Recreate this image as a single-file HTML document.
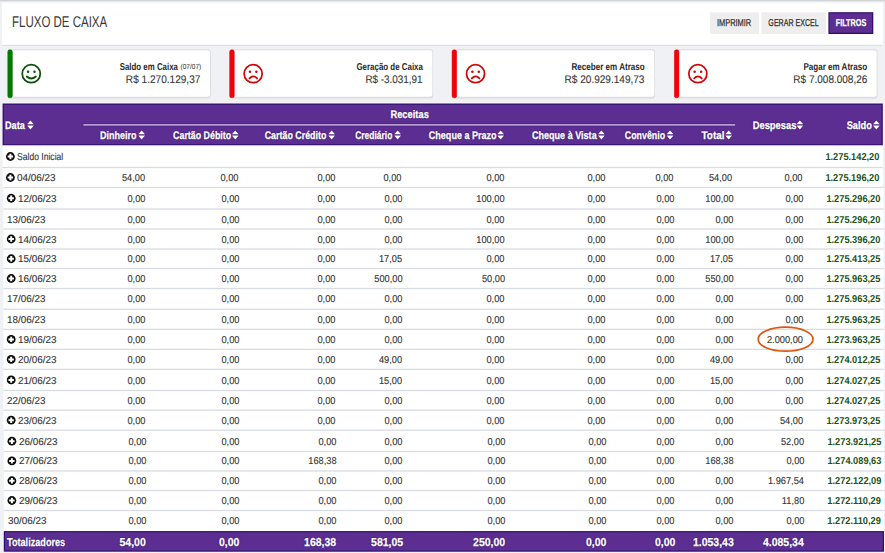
<!DOCTYPE html>
<html lang="pt-BR"><head><meta charset="utf-8"><title>Fluxo de Caixa</title>
<style>
html,body{margin:0;padding:0}
body{width:885px;height:553px;overflow:hidden;background:#f0f1f5;position:relative;font-family:"Liberation Sans",sans-serif;text-rendering:geometricPrecision}
#bg{position:absolute;left:0;top:0}
.t{position:absolute;white-space:nowrap;display:block;line-height:20px;height:20px;-webkit-text-stroke:0.12px currentColor}
</style></head>
<body>
<svg id="bg" width="885" height="553" viewBox="0 0 885 553">
<rect x="0.00" y="0.00" width="885.00" height="553.00" fill="#f0f1f5" />
<rect x="0.00" y="0.00" width="885.00" height="1.00" fill="#d3d4d7" />
<rect x="0.00" y="1.00" width="885.00" height="1.00" fill="#e7e8ec" />
<rect x="2.00" y="44.60" width="880.80" height="1.40" fill="#e0e1e6" />
<rect x="2.00" y="2.70" width="880.80" height="42.00" fill="#fff" />
<rect x="710.10" y="12.30" width="48.80" height="21.60" fill="#eeeeee" />
<rect x="761.50" y="12.30" width="64.50" height="21.60" fill="#eeeeee" />
<rect x="828.40" y="12.20" width="44.90" height="21.80" fill="#2f0c6b" />
<rect x="829.60" y="13.40" width="42.50" height="19.40" fill="#5c2e91" />
<rect x="7.40" y="50.5" width="203.30" height="48.60" rx="3" fill="#e4e5e9"/>
<rect x="7.20" y="49.3" width="203.50" height="48.50" rx="3" fill="#dadbdf"/>
<rect x="7.80" y="50.2" width="202.20" height="46.60" rx="2.4" fill="#fff"/>
<rect x="6.90" y="49.3" width="6" height="49.10" rx="3" fill="#fff"/>
<rect x="7.75" y="49.8" width="4.6" height="48.00" rx="1.9" fill="#007d00" stroke="#005c00" stroke-width="0.5"/>
<g transform="translate(31.25 73.65)" fill="none" stroke="#0b4f08"><circle r="9.02" stroke-width="1.75"/><circle cx="-3.2" cy="-1.95" r="1.25" fill="#0b4f08" stroke="none"/><circle cx="3.25" cy="-1.95" r="1.25" fill="#0b4f08" stroke="none"/><path d="M-4.5 2.9 Q0 6.8 4.6 2.9" stroke-width="1.8" stroke-linecap="round"/></g>
<rect x="229.30" y="50.5" width="203.80" height="48.60" rx="3" fill="#e4e5e9"/>
<rect x="229.10" y="49.3" width="204.00" height="48.50" rx="3" fill="#dadbdf"/>
<rect x="229.70" y="50.2" width="202.70" height="46.60" rx="2.4" fill="#fff"/>
<rect x="228.80" y="49.3" width="6" height="49.10" rx="3" fill="#fff"/>
<rect x="229.65" y="49.8" width="4.6" height="48.00" rx="1.9" fill="#f40006" stroke="#c40006" stroke-width="0.5"/>
<g transform="translate(253.15 73.65)" fill="none" stroke="#cc0808"><circle r="9.02" stroke-width="1.75"/><circle cx="-3.2" cy="-1.95" r="1.25" fill="#cc0808" stroke="none"/><circle cx="3.25" cy="-1.95" r="1.25" fill="#cc0808" stroke="none"/><path d="M-3.7 4.8 Q0.1 0.5 3.9 4.8" stroke-width="1.8" stroke-linecap="round"/></g>
<rect x="451.70" y="50.5" width="203.30" height="48.60" rx="3" fill="#e4e5e9"/>
<rect x="451.50" y="49.3" width="203.50" height="48.50" rx="3" fill="#dadbdf"/>
<rect x="452.10" y="50.2" width="202.20" height="46.60" rx="2.4" fill="#fff"/>
<rect x="451.20" y="49.3" width="6" height="49.10" rx="3" fill="#fff"/>
<rect x="452.05" y="49.8" width="4.6" height="48.00" rx="1.9" fill="#f40006" stroke="#c40006" stroke-width="0.5"/>
<g transform="translate(475.55 73.65)" fill="none" stroke="#cc0808"><circle r="9.02" stroke-width="1.75"/><circle cx="-3.2" cy="-1.95" r="1.25" fill="#cc0808" stroke="none"/><circle cx="3.25" cy="-1.95" r="1.25" fill="#cc0808" stroke="none"/><path d="M-3.7 4.8 Q0.1 0.5 3.9 4.8" stroke-width="1.8" stroke-linecap="round"/></g>
<rect x="674.00" y="50.5" width="203.40" height="48.60" rx="3" fill="#e4e5e9"/>
<rect x="673.80" y="49.3" width="203.60" height="48.50" rx="3" fill="#dadbdf"/>
<rect x="674.40" y="50.2" width="202.30" height="46.60" rx="2.4" fill="#fff"/>
<rect x="673.50" y="49.3" width="6" height="49.10" rx="3" fill="#fff"/>
<rect x="674.35" y="49.8" width="4.6" height="48.00" rx="1.9" fill="#f40006" stroke="#c40006" stroke-width="0.5"/>
<g transform="translate(697.85 73.65)" fill="none" stroke="#cc0808"><circle r="9.02" stroke-width="1.75"/><circle cx="-3.2" cy="-1.95" r="1.25" fill="#cc0808" stroke="none"/><circle cx="3.25" cy="-1.95" r="1.25" fill="#cc0808" stroke="none"/><path d="M-3.7 4.8 Q0.1 0.5 3.9 4.8" stroke-width="1.8" stroke-linecap="round"/></g>
<rect x="2.30" y="102.50" width="880.80" height="1.50" fill="#fbfbfd" />
<rect x="2.60" y="103.50" width="880.20" height="42.00" fill="#2f0c6b" />
<rect x="3.80" y="104.70" width="877.80" height="39.60" fill="#5c2e91" />
<rect x="82.80" y="123.40" width="653.00" height="3.10" fill="#4a2384" />
<rect x="83.40" y="124.10" width="651.80" height="1.60" fill="#bda9da" />
<path transform="translate(27.00 120.40)" d="M0 3.9 L3.45 0 L6.9 3.9Z M0 5.1 L3.45 9 L6.9 5.1Z" fill="#fff" stroke="#3b1779" stroke-width="0.9" paint-order="stroke"/>
<path transform="translate(138.20 130.40)" d="M0 3.9 L3.45 0 L6.9 3.9Z M0 5.1 L3.45 9 L6.9 5.1Z" fill="#fff" stroke="#3b1779" stroke-width="0.9" paint-order="stroke"/>
<path transform="translate(231.80 130.40)" d="M0 3.9 L3.45 0 L6.9 3.9Z M0 5.1 L3.45 9 L6.9 5.1Z" fill="#fff" stroke="#3b1779" stroke-width="0.9" paint-order="stroke"/>
<path transform="translate(328.20 130.40)" d="M0 3.9 L3.45 0 L6.9 3.9Z M0 5.1 L3.45 9 L6.9 5.1Z" fill="#fff" stroke="#3b1779" stroke-width="0.9" paint-order="stroke"/>
<path transform="translate(394.20 130.40)" d="M0 3.9 L3.45 0 L6.9 3.9Z M0 5.1 L3.45 9 L6.9 5.1Z" fill="#fff" stroke="#3b1779" stroke-width="0.9" paint-order="stroke"/>
<path transform="translate(497.20 130.40)" d="M0 3.9 L3.45 0 L6.9 3.9Z M0 5.1 L3.45 9 L6.9 5.1Z" fill="#fff" stroke="#3b1779" stroke-width="0.9" paint-order="stroke"/>
<path transform="translate(597.90 130.40)" d="M0 3.9 L3.45 0 L6.9 3.9Z M0 5.1 L3.45 9 L6.9 5.1Z" fill="#fff" stroke="#3b1779" stroke-width="0.9" paint-order="stroke"/>
<path transform="translate(666.60 130.40)" d="M0 3.9 L3.45 0 L6.9 3.9Z M0 5.1 L3.45 9 L6.9 5.1Z" fill="#fff" stroke="#3b1779" stroke-width="0.9" paint-order="stroke"/>
<path transform="translate(725.20 130.40)" d="M0 3.9 L3.45 0 L6.9 3.9Z M0 5.1 L3.45 9 L6.9 5.1Z" fill="#fff" stroke="#3b1779" stroke-width="0.9" paint-order="stroke"/>
<path transform="translate(796.40 120.40)" d="M0 3.9 L3.45 0 L6.9 3.9Z M0 5.1 L3.45 9 L6.9 5.1Z" fill="#fff" stroke="#3b1779" stroke-width="0.9" paint-order="stroke"/>
<path transform="translate(872.90 120.40)" d="M0 3.9 L3.45 0 L6.9 3.9Z M0 5.1 L3.45 9 L6.9 5.1Z" fill="#fff" stroke="#3b1779" stroke-width="0.9" paint-order="stroke"/>
<rect x="2.60" y="145.50" width="880.20" height="42.00" fill="#fff" />
<rect x="3.40" y="187.50" width="880.20" height="242.70" fill="#fff" />
<rect x="3.80" y="430.20" width="880.20" height="100.90" fill="#fff" />
<g transform="translate(10.40 156.50)"><circle r="4.4" fill="#0a0a0a"/><path d="M-2.7 0H2.7M0 -2.7V2.7" stroke="#fff" stroke-width="2" fill="none"/></g>
<rect x="2.60" y="166.85" width="880.20" height="1.30" fill="#d9dce3" />
<g transform="translate(10.40 177.50)"><circle r="4.4" fill="#0a0a0a"/><path d="M-2.7 0H2.7M0 -2.7V2.7" stroke="#fff" stroke-width="2" fill="none"/></g>
<rect x="3.40" y="186.85" width="880.20" height="1.30" fill="#d9dce3" />
<g transform="translate(11.20 198.25)"><circle r="4.4" fill="#0a0a0a"/><path d="M-2.7 0H2.7M0 -2.7V2.7" stroke="#fff" stroke-width="2" fill="none"/></g>
<rect x="3.40" y="208.35" width="880.20" height="1.30" fill="#d9dce3" />
<rect x="3.40" y="228.35" width="880.20" height="1.30" fill="#d9dce3" />
<g transform="translate(11.20 239.00)"><circle r="4.4" fill="#0a0a0a"/><path d="M-2.7 0H2.7M0 -2.7V2.7" stroke="#fff" stroke-width="2" fill="none"/></g>
<rect x="3.40" y="248.35" width="880.20" height="1.30" fill="#d9dce3" />
<g transform="translate(11.20 258.75)"><circle r="4.4" fill="#0a0a0a"/><path d="M-2.7 0H2.7M0 -2.7V2.7" stroke="#fff" stroke-width="2" fill="none"/></g>
<rect x="3.40" y="267.85" width="880.20" height="1.30" fill="#d9dce3" />
<g transform="translate(11.20 278.50)"><circle r="4.4" fill="#0a0a0a"/><path d="M-2.7 0H2.7M0 -2.7V2.7" stroke="#fff" stroke-width="2" fill="none"/></g>
<rect x="3.40" y="287.85" width="880.20" height="1.30" fill="#d9dce3" />
<rect x="3.40" y="308.55" width="880.20" height="1.30" fill="#d9dce3" />
<rect x="3.40" y="328.75" width="880.20" height="1.30" fill="#d9dce3" />
<g transform="translate(11.20 339.40)"><circle r="4.4" fill="#0a0a0a"/><path d="M-2.7 0H2.7M0 -2.7V2.7" stroke="#fff" stroke-width="2" fill="none"/></g>
<rect x="3.40" y="348.75" width="880.20" height="1.30" fill="#d9dce3" />
<g transform="translate(11.20 359.40)"><circle r="4.4" fill="#0a0a0a"/><path d="M-2.7 0H2.7M0 -2.7V2.7" stroke="#fff" stroke-width="2" fill="none"/></g>
<rect x="3.40" y="368.75" width="880.20" height="1.30" fill="#d9dce3" />
<g transform="translate(11.20 379.95)"><circle r="4.4" fill="#0a0a0a"/><path d="M-2.7 0H2.7M0 -2.7V2.7" stroke="#fff" stroke-width="2" fill="none"/></g>
<rect x="3.40" y="389.85" width="880.20" height="1.30" fill="#d9dce3" />
<rect x="3.40" y="409.55" width="880.20" height="1.30" fill="#d9dce3" />
<g transform="translate(11.20 420.20)"><circle r="4.4" fill="#0a0a0a"/><path d="M-2.7 0H2.7M0 -2.7V2.7" stroke="#fff" stroke-width="2" fill="none"/></g>
<rect x="4.10" y="429.55" width="880.20" height="1.30" fill="#d9dce3" />
<g transform="translate(11.90 441.20)"><circle r="4.4" fill="#0a0a0a"/><path d="M-2.7 0H2.7M0 -2.7V2.7" stroke="#fff" stroke-width="2" fill="none"/></g>
<rect x="4.10" y="450.85" width="880.20" height="1.30" fill="#d9dce3" />
<g transform="translate(11.90 460.90)"><circle r="4.4" fill="#0a0a0a"/><path d="M-2.7 0H2.7M0 -2.7V2.7" stroke="#fff" stroke-width="2" fill="none"/></g>
<rect x="4.10" y="470.35" width="880.20" height="1.30" fill="#d9dce3" />
<g transform="translate(11.90 480.75)"><circle r="4.4" fill="#0a0a0a"/><path d="M-2.7 0H2.7M0 -2.7V2.7" stroke="#fff" stroke-width="2" fill="none"/></g>
<rect x="4.10" y="489.85" width="880.20" height="1.30" fill="#d9dce3" />
<g transform="translate(11.90 500.50)"><circle r="4.4" fill="#0a0a0a"/><path d="M-2.7 0H2.7M0 -2.7V2.7" stroke="#fff" stroke-width="2" fill="none"/></g>
<rect x="4.10" y="509.85" width="880.20" height="1.30" fill="#d9dce3" />
<ellipse cx="785.6" cy="339.2" rx="27.4" ry="12" fill="none" stroke="#db5810" stroke-width="1.7"/>
<rect x="3.80" y="531.10" width="880.20" height="20.60" fill="#2f0c6b" />
<rect x="5.00" y="532.30" width="877.80" height="18.20" fill="#5c2e91" />
</svg>
<span class="t" style="top:13px;font-size:15.5px;color:#383838;left:11.90px;transform-origin:0 50%;transform:scaleX(0.7418);-webkit-text-stroke:0;">FLUXO DE CAIXA</span>
<span class="t" style="top:14px;font-size:10px;color:#2e2e2e;left:711.45px;transform-origin:50% 50%;transform:scaleX(0.7417);-webkit-text-stroke:0.25px currentColor;">IMPRIMIR</span>
<span class="t" style="top:14px;font-size:10px;color:#2e2e2e;left:758.18px;transform-origin:50% 50%;transform:scaleX(0.7085);-webkit-text-stroke:0.25px currentColor;">GERAR EXCEL</span>
<span class="t" style="top:14px;font-size:10px;color:#fff;font-weight:700;-webkit-text-stroke:0;left:829.83px;transform-origin:50% 50%;transform:scaleX(0.7233);-webkit-text-stroke:0.25px currentColor;">FILTROS</span>
<span class="t" style="top:58px;font-size:7px;color:#484848;right:683.60px;transform-origin:100% 50%;transform:scaleX(0.9288);">(07/07)</span>
<span class="t" style="top:58px;font-size:10px;color:#2a2a2a;font-weight:700;-webkit-text-stroke:0;right:707.00px;transform-origin:100% 50%;transform:scaleX(0.7873);">Saldo em Caixa</span>
<span class="t" style="top:70px;font-size:11px;color:#383838;right:684.30px;transform-origin:100% 50%;transform:scaleX(0.9158);-webkit-text-stroke:0.12px currentColor;">R$ 1.270.129,37</span>
<span class="t" style="top:58px;font-size:10px;color:#2a2a2a;font-weight:700;-webkit-text-stroke:0;right:462.10px;transform-origin:100% 50%;transform:scaleX(0.7922);">Geração de Caixa</span>
<span class="t" style="top:70px;font-size:11px;color:#383838;right:462.40px;transform-origin:100% 50%;transform:scaleX(0.8994);-webkit-text-stroke:0.12px currentColor;">R$ -3.031,91</span>
<span class="t" style="top:58px;font-size:10px;color:#2a2a2a;font-weight:700;-webkit-text-stroke:0;right:239.90px;transform-origin:100% 50%;transform:scaleX(0.8074);">Receber em Atraso</span>
<span class="t" style="top:70px;font-size:11px;color:#383838;right:240.50px;transform-origin:100% 50%;transform:scaleX(0.9135);-webkit-text-stroke:0.12px currentColor;">R$ 20.929.149,73</span>
<span class="t" style="top:58px;font-size:10px;color:#2a2a2a;font-weight:700;-webkit-text-stroke:0;right:17.70px;transform-origin:100% 50%;transform:scaleX(0.8052);">Pagar em Atraso</span>
<span class="t" style="top:70px;font-size:11px;color:#383838;right:17.80px;transform-origin:100% 50%;transform:scaleX(0.9097);-webkit-text-stroke:0.12px currentColor;">R$ 7.008.008,26</span>
<span class="t" style="top:116px;font-size:11px;color:#fff;font-weight:700;-webkit-text-stroke:0;left:5.40px;transform-origin:0 50%;transform:scaleX(0.8304);-webkit-text-stroke:0.3px #fff;text-shadow:0 0 1px #2c0a66,0 0 1.5px #2c0a66;">Data</span>
<span class="t" style="top:105px;font-size:11px;color:#fff;font-weight:700;-webkit-text-stroke:0;left:386.57px;transform-origin:50% 50%;transform:scaleX(0.8486);-webkit-text-stroke:0.3px #fff;text-shadow:0 0 1px #2c0a66,0 0 1.5px #2c0a66;">Receitas</span>
<span class="t" style="top:126px;font-size:11px;color:#fff;font-weight:700;-webkit-text-stroke:0;right:748.45px;transform-origin:100% 50%;transform:scaleX(0.8181);-webkit-text-stroke:0.3px #fff;text-shadow:0 0 1px #2c0a66,0 0 1.5px #2c0a66;">Dinheiro</span>
<span class="t" style="top:126px;font-size:11px;color:#fff;font-weight:700;-webkit-text-stroke:0;right:654.05px;transform-origin:100% 50%;transform:scaleX(0.8042);-webkit-text-stroke:0.3px #fff;text-shadow:0 0 1px #2c0a66,0 0 1.5px #2c0a66;">Cartão Débito</span>
<span class="t" style="top:126px;font-size:11px;color:#fff;font-weight:700;-webkit-text-stroke:0;right:558.35px;transform-origin:100% 50%;transform:scaleX(0.8076);-webkit-text-stroke:0.3px #fff;text-shadow:0 0 1px #2c0a66,0 0 1.5px #2c0a66;">Cartão Crédito</span>
<span class="t" style="top:126px;font-size:11px;color:#fff;font-weight:700;-webkit-text-stroke:0;right:492.45px;transform-origin:100% 50%;transform:scaleX(0.7682);-webkit-text-stroke:0.3px #fff;text-shadow:0 0 1px #2c0a66,0 0 1.5px #2c0a66;">Crediário</span>
<span class="t" style="top:126px;font-size:11px;color:#fff;font-weight:700;-webkit-text-stroke:0;right:388.65px;transform-origin:100% 50%;transform:scaleX(0.8204);-webkit-text-stroke:0.3px #fff;text-shadow:0 0 1px #2c0a66,0 0 1.5px #2c0a66;">Cheque a Prazo</span>
<span class="t" style="top:126px;font-size:11px;color:#fff;font-weight:700;-webkit-text-stroke:0;right:288.45px;transform-origin:100% 50%;transform:scaleX(0.8225);-webkit-text-stroke:0.3px #fff;text-shadow:0 0 1px #2c0a66,0 0 1.5px #2c0a66;">Cheque à Vista</span>
<span class="t" style="top:126px;font-size:11px;color:#fff;font-weight:700;-webkit-text-stroke:0;right:219.85px;transform-origin:100% 50%;transform:scaleX(0.8042);-webkit-text-stroke:0.3px #fff;text-shadow:0 0 1px #2c0a66,0 0 1.5px #2c0a66;">Convênio</span>
<span class="t" style="top:126px;font-size:11px;color:#fff;font-weight:700;-webkit-text-stroke:0;right:160.25px;transform-origin:100% 50%;transform:scaleX(0.8995);-webkit-text-stroke:0.3px #fff;text-shadow:0 0 1px #2c0a66,0 0 1.5px #2c0a66;">Total</span>
<span class="t" style="top:116px;font-size:11px;color:#fff;font-weight:700;-webkit-text-stroke:0;right:88.65px;transform-origin:100% 50%;transform:scaleX(0.8507);-webkit-text-stroke:0.3px #fff;text-shadow:0 0 1px #2c0a66,0 0 1.5px #2c0a66;">Despesas</span>
<span class="t" style="top:116px;font-size:11px;color:#fff;font-weight:700;-webkit-text-stroke:0;right:12.65px;transform-origin:100% 50%;transform:scaleX(0.8447);-webkit-text-stroke:0.3px #fff;text-shadow:0 0 1px #2c0a66,0 0 1.5px #2c0a66;">Saldo</span>
<span class="t" style="top:148px;font-size:10px;color:#333;left:17.00px;transform-origin:0 50%;transform:scaleX(0.8568);">Saldo Inicial</span>
<span class="t" style="top:148px;font-size:10px;color:#1a5218;font-weight:700;-webkit-text-stroke:0;right:5.40px;transform-origin:100% 50%;transform:scaleX(0.9250);">1.275.142,20</span>
<span class="t" style="top:169px;font-size:10px;color:#333;left:17.00px;transform-origin:0 50%;transform:scaleX(0.9890);">04/06/23</span>
<span class="t" style="top:169px;font-size:10px;color:#333;right:740.40px;transform-origin:100% 50%;transform:scaleX(0.9250);">54,00</span>
<span class="t" style="top:169px;font-size:10px;color:#333;right:646.80px;transform-origin:100% 50%;transform:scaleX(0.9250);">0,00</span>
<span class="t" style="top:169px;font-size:10px;color:#333;right:550.00px;transform-origin:100% 50%;transform:scaleX(0.9250);">0,00</span>
<span class="t" style="top:169px;font-size:10px;color:#333;right:483.60px;transform-origin:100% 50%;transform:scaleX(0.9250);">0,00</span>
<span class="t" style="top:169px;font-size:10px;color:#333;right:381.00px;transform-origin:100% 50%;transform:scaleX(0.9250);">0,00</span>
<span class="t" style="top:169px;font-size:10px;color:#333;right:280.00px;transform-origin:100% 50%;transform:scaleX(0.9250);">0,00</span>
<span class="t" style="top:169px;font-size:10px;color:#333;right:211.60px;transform-origin:100% 50%;transform:scaleX(0.9250);">0,00</span>
<span class="t" style="top:169px;font-size:10px;color:#333;right:152.60px;transform-origin:100% 50%;transform:scaleX(0.9250);">54,00</span>
<span class="t" style="top:169px;font-size:10px;color:#333;right:82.40px;transform-origin:100% 50%;transform:scaleX(0.9250);">0,00</span>
<span class="t" style="top:169px;font-size:10px;color:#1a5218;font-weight:700;-webkit-text-stroke:0;right:5.40px;transform-origin:100% 50%;transform:scaleX(0.9250);">1.275.196,20</span>
<span class="t" style="top:190px;font-size:10px;color:#333;left:17.80px;transform-origin:0 50%;transform:scaleX(0.9890);">12/06/23</span>
<span class="t" style="top:190px;font-size:10px;color:#333;right:739.60px;transform-origin:100% 50%;transform:scaleX(0.9250);">0,00</span>
<span class="t" style="top:190px;font-size:10px;color:#333;right:646.00px;transform-origin:100% 50%;transform:scaleX(0.9250);">0,00</span>
<span class="t" style="top:190px;font-size:10px;color:#333;right:549.20px;transform-origin:100% 50%;transform:scaleX(0.9250);">0,00</span>
<span class="t" style="top:190px;font-size:10px;color:#333;right:482.80px;transform-origin:100% 50%;transform:scaleX(0.9250);">0,00</span>
<span class="t" style="top:190px;font-size:10px;color:#333;right:380.20px;transform-origin:100% 50%;transform:scaleX(0.9250);">100,00</span>
<span class="t" style="top:190px;font-size:10px;color:#333;right:279.20px;transform-origin:100% 50%;transform:scaleX(0.9250);">0,00</span>
<span class="t" style="top:190px;font-size:10px;color:#333;right:210.80px;transform-origin:100% 50%;transform:scaleX(0.9250);">0,00</span>
<span class="t" style="top:190px;font-size:10px;color:#333;right:151.80px;transform-origin:100% 50%;transform:scaleX(0.9250);">100,00</span>
<span class="t" style="top:190px;font-size:10px;color:#333;right:81.60px;transform-origin:100% 50%;transform:scaleX(0.9250);">0,00</span>
<span class="t" style="top:190px;font-size:10px;color:#1a5218;font-weight:700;-webkit-text-stroke:0;right:4.60px;transform-origin:100% 50%;transform:scaleX(0.9250);">1.275.296,20</span>
<span class="t" style="top:211px;font-size:10px;color:#333;left:7.00px;transform-origin:0 50%;transform:scaleX(0.9890);">13/06/23</span>
<span class="t" style="top:211px;font-size:10px;color:#333;right:739.60px;transform-origin:100% 50%;transform:scaleX(0.9250);">0,00</span>
<span class="t" style="top:211px;font-size:10px;color:#333;right:646.00px;transform-origin:100% 50%;transform:scaleX(0.9250);">0,00</span>
<span class="t" style="top:211px;font-size:10px;color:#333;right:549.20px;transform-origin:100% 50%;transform:scaleX(0.9250);">0,00</span>
<span class="t" style="top:211px;font-size:10px;color:#333;right:482.80px;transform-origin:100% 50%;transform:scaleX(0.9250);">0,00</span>
<span class="t" style="top:211px;font-size:10px;color:#333;right:380.20px;transform-origin:100% 50%;transform:scaleX(0.9250);">0,00</span>
<span class="t" style="top:211px;font-size:10px;color:#333;right:279.20px;transform-origin:100% 50%;transform:scaleX(0.9250);">0,00</span>
<span class="t" style="top:211px;font-size:10px;color:#333;right:210.80px;transform-origin:100% 50%;transform:scaleX(0.9250);">0,00</span>
<span class="t" style="top:211px;font-size:10px;color:#333;right:151.80px;transform-origin:100% 50%;transform:scaleX(0.9250);">0,00</span>
<span class="t" style="top:211px;font-size:10px;color:#333;right:81.60px;transform-origin:100% 50%;transform:scaleX(0.9250);">0,00</span>
<span class="t" style="top:211px;font-size:10px;color:#1a5218;font-weight:700;-webkit-text-stroke:0;right:4.60px;transform-origin:100% 50%;transform:scaleX(0.9250);">1.275.296,20</span>
<span class="t" style="top:231px;font-size:10px;color:#333;left:17.80px;transform-origin:0 50%;transform:scaleX(0.9890);">14/06/23</span>
<span class="t" style="top:231px;font-size:10px;color:#333;right:739.60px;transform-origin:100% 50%;transform:scaleX(0.9250);">0,00</span>
<span class="t" style="top:231px;font-size:10px;color:#333;right:646.00px;transform-origin:100% 50%;transform:scaleX(0.9250);">0,00</span>
<span class="t" style="top:231px;font-size:10px;color:#333;right:549.20px;transform-origin:100% 50%;transform:scaleX(0.9250);">0,00</span>
<span class="t" style="top:231px;font-size:10px;color:#333;right:482.80px;transform-origin:100% 50%;transform:scaleX(0.9250);">0,00</span>
<span class="t" style="top:231px;font-size:10px;color:#333;right:380.20px;transform-origin:100% 50%;transform:scaleX(0.9250);">100,00</span>
<span class="t" style="top:231px;font-size:10px;color:#333;right:279.20px;transform-origin:100% 50%;transform:scaleX(0.9250);">0,00</span>
<span class="t" style="top:231px;font-size:10px;color:#333;right:210.80px;transform-origin:100% 50%;transform:scaleX(0.9250);">0,00</span>
<span class="t" style="top:231px;font-size:10px;color:#333;right:151.80px;transform-origin:100% 50%;transform:scaleX(0.9250);">100,00</span>
<span class="t" style="top:231px;font-size:10px;color:#333;right:81.60px;transform-origin:100% 50%;transform:scaleX(0.9250);">0,00</span>
<span class="t" style="top:231px;font-size:10px;color:#1a5218;font-weight:700;-webkit-text-stroke:0;right:4.60px;transform-origin:100% 50%;transform:scaleX(0.9250);">1.275.396,20</span>
<span class="t" style="top:250px;font-size:10px;color:#333;left:17.80px;transform-origin:0 50%;transform:scaleX(0.9890);">15/06/23</span>
<span class="t" style="top:250px;font-size:10px;color:#333;right:739.60px;transform-origin:100% 50%;transform:scaleX(0.9250);">0,00</span>
<span class="t" style="top:250px;font-size:10px;color:#333;right:646.00px;transform-origin:100% 50%;transform:scaleX(0.9250);">0,00</span>
<span class="t" style="top:250px;font-size:10px;color:#333;right:549.20px;transform-origin:100% 50%;transform:scaleX(0.9250);">0,00</span>
<span class="t" style="top:250px;font-size:10px;color:#333;right:482.80px;transform-origin:100% 50%;transform:scaleX(0.9250);">17,05</span>
<span class="t" style="top:250px;font-size:10px;color:#333;right:380.20px;transform-origin:100% 50%;transform:scaleX(0.9250);">0,00</span>
<span class="t" style="top:250px;font-size:10px;color:#333;right:279.20px;transform-origin:100% 50%;transform:scaleX(0.9250);">0,00</span>
<span class="t" style="top:250px;font-size:10px;color:#333;right:210.80px;transform-origin:100% 50%;transform:scaleX(0.9250);">0,00</span>
<span class="t" style="top:250px;font-size:10px;color:#333;right:151.80px;transform-origin:100% 50%;transform:scaleX(0.9250);">17,05</span>
<span class="t" style="top:250px;font-size:10px;color:#333;right:81.60px;transform-origin:100% 50%;transform:scaleX(0.9250);">0,00</span>
<span class="t" style="top:250px;font-size:10px;color:#1a5218;font-weight:700;-webkit-text-stroke:0;right:4.60px;transform-origin:100% 50%;transform:scaleX(0.9250);">1.275.413,25</span>
<span class="t" style="top:270px;font-size:10px;color:#333;left:17.80px;transform-origin:0 50%;transform:scaleX(0.9890);">16/06/23</span>
<span class="t" style="top:270px;font-size:10px;color:#333;right:739.60px;transform-origin:100% 50%;transform:scaleX(0.9250);">0,00</span>
<span class="t" style="top:270px;font-size:10px;color:#333;right:646.00px;transform-origin:100% 50%;transform:scaleX(0.9250);">0,00</span>
<span class="t" style="top:270px;font-size:10px;color:#333;right:549.20px;transform-origin:100% 50%;transform:scaleX(0.9250);">0,00</span>
<span class="t" style="top:270px;font-size:10px;color:#333;right:482.80px;transform-origin:100% 50%;transform:scaleX(0.9250);">500,00</span>
<span class="t" style="top:270px;font-size:10px;color:#333;right:380.20px;transform-origin:100% 50%;transform:scaleX(0.9250);">50,00</span>
<span class="t" style="top:270px;font-size:10px;color:#333;right:279.20px;transform-origin:100% 50%;transform:scaleX(0.9250);">0,00</span>
<span class="t" style="top:270px;font-size:10px;color:#333;right:210.80px;transform-origin:100% 50%;transform:scaleX(0.9250);">0,00</span>
<span class="t" style="top:270px;font-size:10px;color:#333;right:151.80px;transform-origin:100% 50%;transform:scaleX(0.9250);">550,00</span>
<span class="t" style="top:270px;font-size:10px;color:#333;right:81.60px;transform-origin:100% 50%;transform:scaleX(0.9250);">0,00</span>
<span class="t" style="top:270px;font-size:10px;color:#1a5218;font-weight:700;-webkit-text-stroke:0;right:4.60px;transform-origin:100% 50%;transform:scaleX(0.9250);">1.275.963,25</span>
<span class="t" style="top:290px;font-size:10px;color:#333;left:7.00px;transform-origin:0 50%;transform:scaleX(0.9890);">17/06/23</span>
<span class="t" style="top:290px;font-size:10px;color:#333;right:739.60px;transform-origin:100% 50%;transform:scaleX(0.9250);">0,00</span>
<span class="t" style="top:290px;font-size:10px;color:#333;right:646.00px;transform-origin:100% 50%;transform:scaleX(0.9250);">0,00</span>
<span class="t" style="top:290px;font-size:10px;color:#333;right:549.20px;transform-origin:100% 50%;transform:scaleX(0.9250);">0,00</span>
<span class="t" style="top:290px;font-size:10px;color:#333;right:482.80px;transform-origin:100% 50%;transform:scaleX(0.9250);">0,00</span>
<span class="t" style="top:290px;font-size:10px;color:#333;right:380.20px;transform-origin:100% 50%;transform:scaleX(0.9250);">0,00</span>
<span class="t" style="top:290px;font-size:10px;color:#333;right:279.20px;transform-origin:100% 50%;transform:scaleX(0.9250);">0,00</span>
<span class="t" style="top:290px;font-size:10px;color:#333;right:210.80px;transform-origin:100% 50%;transform:scaleX(0.9250);">0,00</span>
<span class="t" style="top:290px;font-size:10px;color:#333;right:151.80px;transform-origin:100% 50%;transform:scaleX(0.9250);">0,00</span>
<span class="t" style="top:290px;font-size:10px;color:#333;right:81.60px;transform-origin:100% 50%;transform:scaleX(0.9250);">0,00</span>
<span class="t" style="top:290px;font-size:10px;color:#1a5218;font-weight:700;-webkit-text-stroke:0;right:4.60px;transform-origin:100% 50%;transform:scaleX(0.9250);">1.275.963,25</span>
<span class="t" style="top:311px;font-size:10px;color:#333;left:7.00px;transform-origin:0 50%;transform:scaleX(0.9890);">18/06/23</span>
<span class="t" style="top:311px;font-size:10px;color:#333;right:739.60px;transform-origin:100% 50%;transform:scaleX(0.9250);">0,00</span>
<span class="t" style="top:311px;font-size:10px;color:#333;right:646.00px;transform-origin:100% 50%;transform:scaleX(0.9250);">0,00</span>
<span class="t" style="top:311px;font-size:10px;color:#333;right:549.20px;transform-origin:100% 50%;transform:scaleX(0.9250);">0,00</span>
<span class="t" style="top:311px;font-size:10px;color:#333;right:482.80px;transform-origin:100% 50%;transform:scaleX(0.9250);">0,00</span>
<span class="t" style="top:311px;font-size:10px;color:#333;right:380.20px;transform-origin:100% 50%;transform:scaleX(0.9250);">0,00</span>
<span class="t" style="top:311px;font-size:10px;color:#333;right:279.20px;transform-origin:100% 50%;transform:scaleX(0.9250);">0,00</span>
<span class="t" style="top:311px;font-size:10px;color:#333;right:210.80px;transform-origin:100% 50%;transform:scaleX(0.9250);">0,00</span>
<span class="t" style="top:311px;font-size:10px;color:#333;right:151.80px;transform-origin:100% 50%;transform:scaleX(0.9250);">0,00</span>
<span class="t" style="top:311px;font-size:10px;color:#333;right:81.60px;transform-origin:100% 50%;transform:scaleX(0.9250);">0,00</span>
<span class="t" style="top:311px;font-size:10px;color:#1a5218;font-weight:700;-webkit-text-stroke:0;right:4.60px;transform-origin:100% 50%;transform:scaleX(0.9250);">1.275.963,25</span>
<span class="t" style="top:331px;font-size:10px;color:#333;left:17.80px;transform-origin:0 50%;transform:scaleX(0.9890);">19/06/23</span>
<span class="t" style="top:331px;font-size:10px;color:#333;right:739.60px;transform-origin:100% 50%;transform:scaleX(0.9250);">0,00</span>
<span class="t" style="top:331px;font-size:10px;color:#333;right:646.00px;transform-origin:100% 50%;transform:scaleX(0.9250);">0,00</span>
<span class="t" style="top:331px;font-size:10px;color:#333;right:549.20px;transform-origin:100% 50%;transform:scaleX(0.9250);">0,00</span>
<span class="t" style="top:331px;font-size:10px;color:#333;right:482.80px;transform-origin:100% 50%;transform:scaleX(0.9250);">0,00</span>
<span class="t" style="top:331px;font-size:10px;color:#333;right:380.20px;transform-origin:100% 50%;transform:scaleX(0.9250);">0,00</span>
<span class="t" style="top:331px;font-size:10px;color:#333;right:279.20px;transform-origin:100% 50%;transform:scaleX(0.9250);">0,00</span>
<span class="t" style="top:331px;font-size:10px;color:#333;right:210.80px;transform-origin:100% 50%;transform:scaleX(0.9250);">0,00</span>
<span class="t" style="top:331px;font-size:10px;color:#333;right:151.80px;transform-origin:100% 50%;transform:scaleX(0.9250);">0,00</span>
<span class="t" style="top:331px;font-size:10px;color:#333;right:81.60px;transform-origin:100% 50%;transform:scaleX(0.9250);">2.000,00</span>
<span class="t" style="top:331px;font-size:10px;color:#1a5218;font-weight:700;-webkit-text-stroke:0;right:4.60px;transform-origin:100% 50%;transform:scaleX(0.9250);">1.273.963,25</span>
<span class="t" style="top:351px;font-size:10px;color:#333;left:17.80px;transform-origin:0 50%;transform:scaleX(0.9890);">20/06/23</span>
<span class="t" style="top:351px;font-size:10px;color:#333;right:739.60px;transform-origin:100% 50%;transform:scaleX(0.9250);">0,00</span>
<span class="t" style="top:351px;font-size:10px;color:#333;right:646.00px;transform-origin:100% 50%;transform:scaleX(0.9250);">0,00</span>
<span class="t" style="top:351px;font-size:10px;color:#333;right:549.20px;transform-origin:100% 50%;transform:scaleX(0.9250);">0,00</span>
<span class="t" style="top:351px;font-size:10px;color:#333;right:482.80px;transform-origin:100% 50%;transform:scaleX(0.9250);">49,00</span>
<span class="t" style="top:351px;font-size:10px;color:#333;right:380.20px;transform-origin:100% 50%;transform:scaleX(0.9250);">0,00</span>
<span class="t" style="top:351px;font-size:10px;color:#333;right:279.20px;transform-origin:100% 50%;transform:scaleX(0.9250);">0,00</span>
<span class="t" style="top:351px;font-size:10px;color:#333;right:210.80px;transform-origin:100% 50%;transform:scaleX(0.9250);">0,00</span>
<span class="t" style="top:351px;font-size:10px;color:#333;right:151.80px;transform-origin:100% 50%;transform:scaleX(0.9250);">49,00</span>
<span class="t" style="top:351px;font-size:10px;color:#333;right:81.60px;transform-origin:100% 50%;transform:scaleX(0.9250);">0,00</span>
<span class="t" style="top:351px;font-size:10px;color:#1a5218;font-weight:700;-webkit-text-stroke:0;right:4.60px;transform-origin:100% 50%;transform:scaleX(0.9250);">1.274.012,25</span>
<span class="t" style="top:372px;font-size:10px;color:#333;left:17.80px;transform-origin:0 50%;transform:scaleX(0.9890);">21/06/23</span>
<span class="t" style="top:372px;font-size:10px;color:#333;right:739.60px;transform-origin:100% 50%;transform:scaleX(0.9250);">0,00</span>
<span class="t" style="top:372px;font-size:10px;color:#333;right:646.00px;transform-origin:100% 50%;transform:scaleX(0.9250);">0,00</span>
<span class="t" style="top:372px;font-size:10px;color:#333;right:549.20px;transform-origin:100% 50%;transform:scaleX(0.9250);">0,00</span>
<span class="t" style="top:372px;font-size:10px;color:#333;right:482.80px;transform-origin:100% 50%;transform:scaleX(0.9250);">15,00</span>
<span class="t" style="top:372px;font-size:10px;color:#333;right:380.20px;transform-origin:100% 50%;transform:scaleX(0.9250);">0,00</span>
<span class="t" style="top:372px;font-size:10px;color:#333;right:279.20px;transform-origin:100% 50%;transform:scaleX(0.9250);">0,00</span>
<span class="t" style="top:372px;font-size:10px;color:#333;right:210.80px;transform-origin:100% 50%;transform:scaleX(0.9250);">0,00</span>
<span class="t" style="top:372px;font-size:10px;color:#333;right:151.80px;transform-origin:100% 50%;transform:scaleX(0.9250);">15,00</span>
<span class="t" style="top:372px;font-size:10px;color:#333;right:81.60px;transform-origin:100% 50%;transform:scaleX(0.9250);">0,00</span>
<span class="t" style="top:372px;font-size:10px;color:#1a5218;font-weight:700;-webkit-text-stroke:0;right:4.60px;transform-origin:100% 50%;transform:scaleX(0.9250);">1.274.027,25</span>
<span class="t" style="top:392px;font-size:10px;color:#333;left:7.00px;transform-origin:0 50%;transform:scaleX(0.9890);">22/06/23</span>
<span class="t" style="top:392px;font-size:10px;color:#333;right:739.60px;transform-origin:100% 50%;transform:scaleX(0.9250);">0,00</span>
<span class="t" style="top:392px;font-size:10px;color:#333;right:646.00px;transform-origin:100% 50%;transform:scaleX(0.9250);">0,00</span>
<span class="t" style="top:392px;font-size:10px;color:#333;right:549.20px;transform-origin:100% 50%;transform:scaleX(0.9250);">0,00</span>
<span class="t" style="top:392px;font-size:10px;color:#333;right:482.80px;transform-origin:100% 50%;transform:scaleX(0.9250);">0,00</span>
<span class="t" style="top:392px;font-size:10px;color:#333;right:380.20px;transform-origin:100% 50%;transform:scaleX(0.9250);">0,00</span>
<span class="t" style="top:392px;font-size:10px;color:#333;right:279.20px;transform-origin:100% 50%;transform:scaleX(0.9250);">0,00</span>
<span class="t" style="top:392px;font-size:10px;color:#333;right:210.80px;transform-origin:100% 50%;transform:scaleX(0.9250);">0,00</span>
<span class="t" style="top:392px;font-size:10px;color:#333;right:151.80px;transform-origin:100% 50%;transform:scaleX(0.9250);">0,00</span>
<span class="t" style="top:392px;font-size:10px;color:#333;right:81.60px;transform-origin:100% 50%;transform:scaleX(0.9250);">0,00</span>
<span class="t" style="top:392px;font-size:10px;color:#1a5218;font-weight:700;-webkit-text-stroke:0;right:4.60px;transform-origin:100% 50%;transform:scaleX(0.9250);">1.274.027,25</span>
<span class="t" style="top:412px;font-size:10px;color:#333;left:17.80px;transform-origin:0 50%;transform:scaleX(0.9890);">23/06/23</span>
<span class="t" style="top:412px;font-size:10px;color:#333;right:739.60px;transform-origin:100% 50%;transform:scaleX(0.9250);">0,00</span>
<span class="t" style="top:412px;font-size:10px;color:#333;right:646.00px;transform-origin:100% 50%;transform:scaleX(0.9250);">0,00</span>
<span class="t" style="top:412px;font-size:10px;color:#333;right:549.20px;transform-origin:100% 50%;transform:scaleX(0.9250);">0,00</span>
<span class="t" style="top:412px;font-size:10px;color:#333;right:482.80px;transform-origin:100% 50%;transform:scaleX(0.9250);">0,00</span>
<span class="t" style="top:412px;font-size:10px;color:#333;right:380.20px;transform-origin:100% 50%;transform:scaleX(0.9250);">0,00</span>
<span class="t" style="top:412px;font-size:10px;color:#333;right:279.20px;transform-origin:100% 50%;transform:scaleX(0.9250);">0,00</span>
<span class="t" style="top:412px;font-size:10px;color:#333;right:210.80px;transform-origin:100% 50%;transform:scaleX(0.9250);">0,00</span>
<span class="t" style="top:412px;font-size:10px;color:#333;right:151.80px;transform-origin:100% 50%;transform:scaleX(0.9250);">0,00</span>
<span class="t" style="top:412px;font-size:10px;color:#333;right:81.60px;transform-origin:100% 50%;transform:scaleX(0.9250);">54,00</span>
<span class="t" style="top:412px;font-size:10px;color:#1a5218;font-weight:700;-webkit-text-stroke:0;right:4.60px;transform-origin:100% 50%;transform:scaleX(0.9250);">1.273.973,25</span>
<span class="t" style="top:433px;font-size:10px;color:#333;left:18.50px;transform-origin:0 50%;transform:scaleX(0.9890);">26/06/23</span>
<span class="t" style="top:433px;font-size:10px;color:#333;right:738.90px;transform-origin:100% 50%;transform:scaleX(0.9250);">0,00</span>
<span class="t" style="top:433px;font-size:10px;color:#333;right:645.30px;transform-origin:100% 50%;transform:scaleX(0.9250);">0,00</span>
<span class="t" style="top:433px;font-size:10px;color:#333;right:548.50px;transform-origin:100% 50%;transform:scaleX(0.9250);">0,00</span>
<span class="t" style="top:433px;font-size:10px;color:#333;right:482.10px;transform-origin:100% 50%;transform:scaleX(0.9250);">0,00</span>
<span class="t" style="top:433px;font-size:10px;color:#333;right:379.50px;transform-origin:100% 50%;transform:scaleX(0.9250);">0,00</span>
<span class="t" style="top:433px;font-size:10px;color:#333;right:278.50px;transform-origin:100% 50%;transform:scaleX(0.9250);">0,00</span>
<span class="t" style="top:433px;font-size:10px;color:#333;right:210.10px;transform-origin:100% 50%;transform:scaleX(0.9250);">0,00</span>
<span class="t" style="top:433px;font-size:10px;color:#333;right:151.10px;transform-origin:100% 50%;transform:scaleX(0.9250);">0,00</span>
<span class="t" style="top:433px;font-size:10px;color:#333;right:80.90px;transform-origin:100% 50%;transform:scaleX(0.9250);">52,00</span>
<span class="t" style="top:433px;font-size:10px;color:#1a5218;font-weight:700;-webkit-text-stroke:0;right:3.90px;transform-origin:100% 50%;transform:scaleX(0.9250);">1.273.921,25</span>
<span class="t" style="top:452px;font-size:10px;color:#333;left:18.50px;transform-origin:0 50%;transform:scaleX(0.9890);">27/06/23</span>
<span class="t" style="top:452px;font-size:10px;color:#333;right:738.90px;transform-origin:100% 50%;transform:scaleX(0.9250);">0,00</span>
<span class="t" style="top:452px;font-size:10px;color:#333;right:645.30px;transform-origin:100% 50%;transform:scaleX(0.9250);">0,00</span>
<span class="t" style="top:452px;font-size:10px;color:#333;right:548.50px;transform-origin:100% 50%;transform:scaleX(0.9250);">168,38</span>
<span class="t" style="top:452px;font-size:10px;color:#333;right:482.10px;transform-origin:100% 50%;transform:scaleX(0.9250);">0,00</span>
<span class="t" style="top:452px;font-size:10px;color:#333;right:379.50px;transform-origin:100% 50%;transform:scaleX(0.9250);">0,00</span>
<span class="t" style="top:452px;font-size:10px;color:#333;right:278.50px;transform-origin:100% 50%;transform:scaleX(0.9250);">0,00</span>
<span class="t" style="top:452px;font-size:10px;color:#333;right:210.10px;transform-origin:100% 50%;transform:scaleX(0.9250);">0,00</span>
<span class="t" style="top:452px;font-size:10px;color:#333;right:151.10px;transform-origin:100% 50%;transform:scaleX(0.9250);">168,38</span>
<span class="t" style="top:452px;font-size:10px;color:#333;right:80.90px;transform-origin:100% 50%;transform:scaleX(0.9250);">0,00</span>
<span class="t" style="top:452px;font-size:10px;color:#1a5218;font-weight:700;-webkit-text-stroke:0;right:3.90px;transform-origin:100% 50%;transform:scaleX(0.9250);">1.274.089,63</span>
<span class="t" style="top:472px;font-size:10px;color:#333;left:18.50px;transform-origin:0 50%;transform:scaleX(0.9890);">28/06/23</span>
<span class="t" style="top:472px;font-size:10px;color:#333;right:738.90px;transform-origin:100% 50%;transform:scaleX(0.9250);">0,00</span>
<span class="t" style="top:472px;font-size:10px;color:#333;right:645.30px;transform-origin:100% 50%;transform:scaleX(0.9250);">0,00</span>
<span class="t" style="top:472px;font-size:10px;color:#333;right:548.50px;transform-origin:100% 50%;transform:scaleX(0.9250);">0,00</span>
<span class="t" style="top:472px;font-size:10px;color:#333;right:482.10px;transform-origin:100% 50%;transform:scaleX(0.9250);">0,00</span>
<span class="t" style="top:472px;font-size:10px;color:#333;right:379.50px;transform-origin:100% 50%;transform:scaleX(0.9250);">0,00</span>
<span class="t" style="top:472px;font-size:10px;color:#333;right:278.50px;transform-origin:100% 50%;transform:scaleX(0.9250);">0,00</span>
<span class="t" style="top:472px;font-size:10px;color:#333;right:210.10px;transform-origin:100% 50%;transform:scaleX(0.9250);">0,00</span>
<span class="t" style="top:472px;font-size:10px;color:#333;right:151.10px;transform-origin:100% 50%;transform:scaleX(0.9250);">0,00</span>
<span class="t" style="top:472px;font-size:10px;color:#333;right:80.90px;transform-origin:100% 50%;transform:scaleX(0.9250);">1.967,54</span>
<span class="t" style="top:472px;font-size:10px;color:#1a5218;font-weight:700;-webkit-text-stroke:0;right:3.90px;transform-origin:100% 50%;transform:scaleX(0.9250);">1.272.122,09</span>
<span class="t" style="top:492px;font-size:10px;color:#333;left:18.50px;transform-origin:0 50%;transform:scaleX(0.9890);">29/06/23</span>
<span class="t" style="top:492px;font-size:10px;color:#333;right:738.90px;transform-origin:100% 50%;transform:scaleX(0.9250);">0,00</span>
<span class="t" style="top:492px;font-size:10px;color:#333;right:645.30px;transform-origin:100% 50%;transform:scaleX(0.9250);">0,00</span>
<span class="t" style="top:492px;font-size:10px;color:#333;right:548.50px;transform-origin:100% 50%;transform:scaleX(0.9250);">0,00</span>
<span class="t" style="top:492px;font-size:10px;color:#333;right:482.10px;transform-origin:100% 50%;transform:scaleX(0.9250);">0,00</span>
<span class="t" style="top:492px;font-size:10px;color:#333;right:379.50px;transform-origin:100% 50%;transform:scaleX(0.9250);">0,00</span>
<span class="t" style="top:492px;font-size:10px;color:#333;right:278.50px;transform-origin:100% 50%;transform:scaleX(0.9250);">0,00</span>
<span class="t" style="top:492px;font-size:10px;color:#333;right:210.10px;transform-origin:100% 50%;transform:scaleX(0.9250);">0,00</span>
<span class="t" style="top:492px;font-size:10px;color:#333;right:151.10px;transform-origin:100% 50%;transform:scaleX(0.9250);">0,00</span>
<span class="t" style="top:492px;font-size:10px;color:#333;right:80.90px;transform-origin:100% 50%;transform:scaleX(0.9250);">11,80</span>
<span class="t" style="top:492px;font-size:10px;color:#1a5218;font-weight:700;-webkit-text-stroke:0;right:3.90px;transform-origin:100% 50%;transform:scaleX(0.9250);">1.272.110,29</span>
<span class="t" style="top:512px;font-size:10px;color:#333;left:7.70px;transform-origin:0 50%;transform:scaleX(0.9890);">30/06/23</span>
<span class="t" style="top:512px;font-size:10px;color:#333;right:738.90px;transform-origin:100% 50%;transform:scaleX(0.9250);">0,00</span>
<span class="t" style="top:512px;font-size:10px;color:#333;right:645.30px;transform-origin:100% 50%;transform:scaleX(0.9250);">0,00</span>
<span class="t" style="top:512px;font-size:10px;color:#333;right:548.50px;transform-origin:100% 50%;transform:scaleX(0.9250);">0,00</span>
<span class="t" style="top:512px;font-size:10px;color:#333;right:482.10px;transform-origin:100% 50%;transform:scaleX(0.9250);">0,00</span>
<span class="t" style="top:512px;font-size:10px;color:#333;right:379.50px;transform-origin:100% 50%;transform:scaleX(0.9250);">0,00</span>
<span class="t" style="top:512px;font-size:10px;color:#333;right:278.50px;transform-origin:100% 50%;transform:scaleX(0.9250);">0,00</span>
<span class="t" style="top:512px;font-size:10px;color:#333;right:210.10px;transform-origin:100% 50%;transform:scaleX(0.9250);">0,00</span>
<span class="t" style="top:512px;font-size:10px;color:#333;right:151.10px;transform-origin:100% 50%;transform:scaleX(0.9250);">0,00</span>
<span class="t" style="top:512px;font-size:10px;color:#333;right:80.90px;transform-origin:100% 50%;transform:scaleX(0.9250);">0,00</span>
<span class="t" style="top:512px;font-size:10px;color:#1a5218;font-weight:700;-webkit-text-stroke:0;right:3.90px;transform-origin:100% 50%;transform:scaleX(0.9250);">1.272.110,29</span>
<span class="t" style="top:533px;font-size:11.5px;color:#fff;font-weight:700;-webkit-text-stroke:0;left:7.30px;transform-origin:0 50%;transform:scaleX(0.7943);-webkit-text-stroke:0.25px #fff;text-shadow:0 0 1px #2c0a66,0 0 1.5px #2c0a66;">Totalizadores</span>
<span class="t" style="top:533px;font-size:11.5px;color:#fff;font-weight:700;-webkit-text-stroke:0;right:738.80px;transform-origin:100% 50%;transform:scaleX(0.9120);-webkit-text-stroke:0.25px #fff;text-shadow:0 0 1px #2c0a66,0 0 1.5px #2c0a66;">54,00</span>
<span class="t" style="top:533px;font-size:11.5px;color:#fff;font-weight:700;-webkit-text-stroke:0;right:645.20px;transform-origin:100% 50%;transform:scaleX(0.9120);-webkit-text-stroke:0.25px #fff;text-shadow:0 0 1px #2c0a66,0 0 1.5px #2c0a66;">0,00</span>
<span class="t" style="top:533px;font-size:11.5px;color:#fff;font-weight:700;-webkit-text-stroke:0;right:548.40px;transform-origin:100% 50%;transform:scaleX(0.9120);-webkit-text-stroke:0.25px #fff;text-shadow:0 0 1px #2c0a66,0 0 1.5px #2c0a66;">168,38</span>
<span class="t" style="top:533px;font-size:11.5px;color:#fff;font-weight:700;-webkit-text-stroke:0;right:482.00px;transform-origin:100% 50%;transform:scaleX(0.9120);-webkit-text-stroke:0.25px #fff;text-shadow:0 0 1px #2c0a66,0 0 1.5px #2c0a66;">581,05</span>
<span class="t" style="top:533px;font-size:11.5px;color:#fff;font-weight:700;-webkit-text-stroke:0;right:379.40px;transform-origin:100% 50%;transform:scaleX(0.9120);-webkit-text-stroke:0.25px #fff;text-shadow:0 0 1px #2c0a66,0 0 1.5px #2c0a66;">250,00</span>
<span class="t" style="top:533px;font-size:11.5px;color:#fff;font-weight:700;-webkit-text-stroke:0;right:278.40px;transform-origin:100% 50%;transform:scaleX(0.9120);-webkit-text-stroke:0.25px #fff;text-shadow:0 0 1px #2c0a66,0 0 1.5px #2c0a66;">0,00</span>
<span class="t" style="top:533px;font-size:11.5px;color:#fff;font-weight:700;-webkit-text-stroke:0;right:210.00px;transform-origin:100% 50%;transform:scaleX(0.9120);-webkit-text-stroke:0.25px #fff;text-shadow:0 0 1px #2c0a66,0 0 1.5px #2c0a66;">0,00</span>
<span class="t" style="top:533px;font-size:11.5px;color:#fff;font-weight:700;-webkit-text-stroke:0;right:151.00px;transform-origin:100% 50%;transform:scaleX(0.9120);-webkit-text-stroke:0.25px #fff;text-shadow:0 0 1px #2c0a66,0 0 1.5px #2c0a66;">1.053,43</span>
<span class="t" style="top:533px;font-size:11.5px;color:#fff;font-weight:700;-webkit-text-stroke:0;right:80.80px;transform-origin:100% 50%;transform:scaleX(0.9120);-webkit-text-stroke:0.25px #fff;text-shadow:0 0 1px #2c0a66,0 0 1.5px #2c0a66;">4.085,34</span>
</body></html>
